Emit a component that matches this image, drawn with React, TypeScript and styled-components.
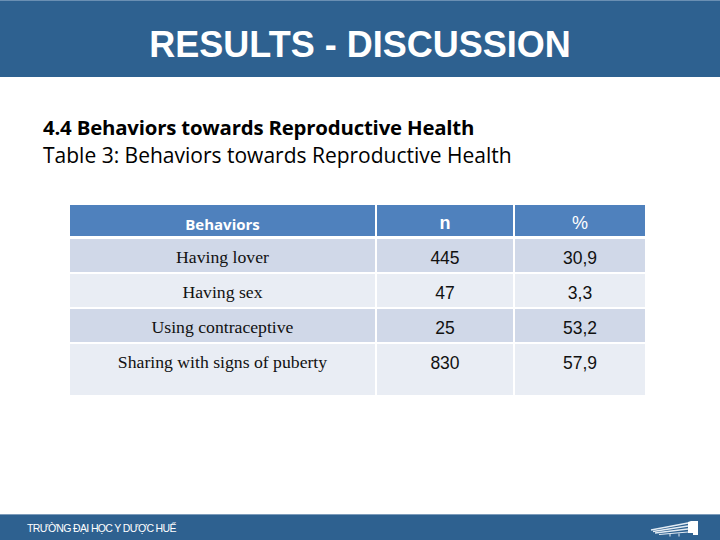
import styled, { createGlobalStyle } from "styled-components";

const GlobalStyle = createGlobalStyle`
    html, body {
        margin: 0;
        padding: 0;
        background: #ffffff;
    }
`;

const Slide = styled.div`
    width: 720px;
    height: 540px;
    display: flex;
    flex-direction: column;
    background: #ffffff;
    overflow: hidden;
`;

const TitleBar = styled.header`
    height: 77px;
    background-color: #2e6190;
    border-top: 1px solid #6a8fb3;
    box-sizing: border-box;
    display: flex;
    align-items: center;
    justify-content: center;
    padding-top: 12px;
`;

const Title = styled.h1`
    margin: 0;
    color: #ffffff;
    font-family: "Liberation Sans", Arial, sans-serif;
    font-size: 36px;
    font-weight: bold;
`;

const Body = styled.main`
    flex: 1;
    padding: 36px 0 0 43px;
`;

const Heading = styled.div`
    font-family: "Open Sans", Lato, sans-serif;
    font-size: 21px;
    line-height: 28px;
    color: #000000;
`;

const Bold = styled.div`
    font-weight: bold;
    font-size: 20.4px;
    letter-spacing: -0.2px;
`;

const Table = styled.div`
    margin: 36px 0 0 27px;
    width: 574px;
    display: grid;
    grid-template-columns: 305px 136px 130px;
    column-gap: 2px;
    row-gap: 2px;
`;

const HeadCell = styled.div<{ $label?: boolean; $plain?: boolean }>`
    height: 31px;
    margin-bottom: 1px;
    background-color: #4f81bd;
    color: #ffffff;
    display: flex;
    align-items: flex-end;
    justify-content: center;
    padding-bottom: 2px;
    box-sizing: border-box;
    font-family: ${(p) => (p.$label ? "\"Open Sans\", Lato, sans-serif" : "\"Liberation Sans\", Arial, sans-serif")};
    font-size: ${(p) => (p.$label ? "15px" : "18px")};
    font-weight: ${(p) => (p.$plain ? "normal" : "bold")};
`;

const Cell = styled.div<{ $odd: boolean; $tall?: boolean; $text?: boolean }>`
    height: ${(p) => (p.$tall ? "51px" : "33px")};
    background-color: ${(p) => (p.$odd ? "#d0d8e8" : "#e9edf4")};
    display: flex;
    justify-content: center;
    align-items: flex-start;
    padding-top: ${(p) => (p.$text ? "8px" : "9px")};
    box-sizing: border-box;
    font-family: ${(p) =>
        p.$text ? "\"Liberation Serif\", \"Times New Roman\", serif" : "\"Liberation Sans\", Arial, sans-serif"};
    font-size: ${(p) => (p.$text ? "17.7px" : "17.5px")};
    color: #111111;
`;

const Footer = styled.footer`
    height: 26px;
    background-color: #2e6190;
    border-top: 1px solid #7d9cbb;
    box-sizing: border-box;
    display: flex;
    align-items: center;
    justify-content: space-between;
    padding: 0 20px 0 27px;
`;

const FooterText = styled.span`
    color: #ffffff;
    font-family: "Liberation Sans", Arial, sans-serif;
    font-size: 10.5px;
    letter-spacing: -0.65px;
`;

const rows = [
    { label: "Having lover", n: "445", pct: "30,9" },
    { label: "Having sex", n: "47", pct: "3,3" },
    { label: "Using contraceptive", n: "25", pct: "53,2" },
    { label: "Sharing with signs of puberty", n: "830", pct: "57,9" },
];

function Logo() {
    return (
        <svg width="50" height="18" viewBox="0 0 50 18">
            <path d="M38 3 L41 2 L48 2 L48 16 L43 16 L43 14 L38 14 Z" fill="#ffffff" />
            <path d="M1 11 L38 4" stroke="#e4ecf4" strokeWidth="1.3" />
            <path d="M3 12.5 L38 7" stroke="#e4ecf4" strokeWidth="1.3" />
            <path d="M5 14 L38 10" stroke="#e4ecf4" strokeWidth="1.3" />
            <path d="M9 15.5 L38 13" stroke="#e4ecf4" strokeWidth="1.1" />
            <path d="M20 15 L20 17.5 M29 14.5 L29 17.5" stroke="#e4ecf4" strokeWidth="1" />
        </svg>
    );
}

export default function App() {
    return (
        <Slide>
            <GlobalStyle />
            <TitleBar>
                <Title>RESULTS - DISCUSSION</Title>
            </TitleBar>
            <Body>
                <Heading>
                    <Bold>4.4 Behaviors towards Reproductive Health</Bold>
                    <div>Table 3: Behaviors towards Reproductive Health</div>
                </Heading>
                <Table>
                    <HeadCell $label>Behaviors</HeadCell>
                    <HeadCell>n</HeadCell>
                    <HeadCell $plain>%</HeadCell>
                    {rows.map((r, i) => {
                        const odd = i % 2 === 0;
                        const tall = i === rows.length - 1;
                        return [
                            <Cell key={r.label} $odd={odd} $tall={tall} $text>
                                {r.label}
                            </Cell>,
                            <Cell key={r.label + "n"} $odd={odd} $tall={tall}>
                                {r.n}
                            </Cell>,
                            <Cell key={r.label + "p"} $odd={odd} $tall={tall}>
                                {r.pct}
                            </Cell>,
                        ];
                    })}
                </Table>
            </Body>
            <Footer>
                <FooterText>TRƯỜNG ĐẠI HỌC Y DƯỢC HUẾ</FooterText>
                <Logo />
            </Footer>
        </Slide>
    );
}
